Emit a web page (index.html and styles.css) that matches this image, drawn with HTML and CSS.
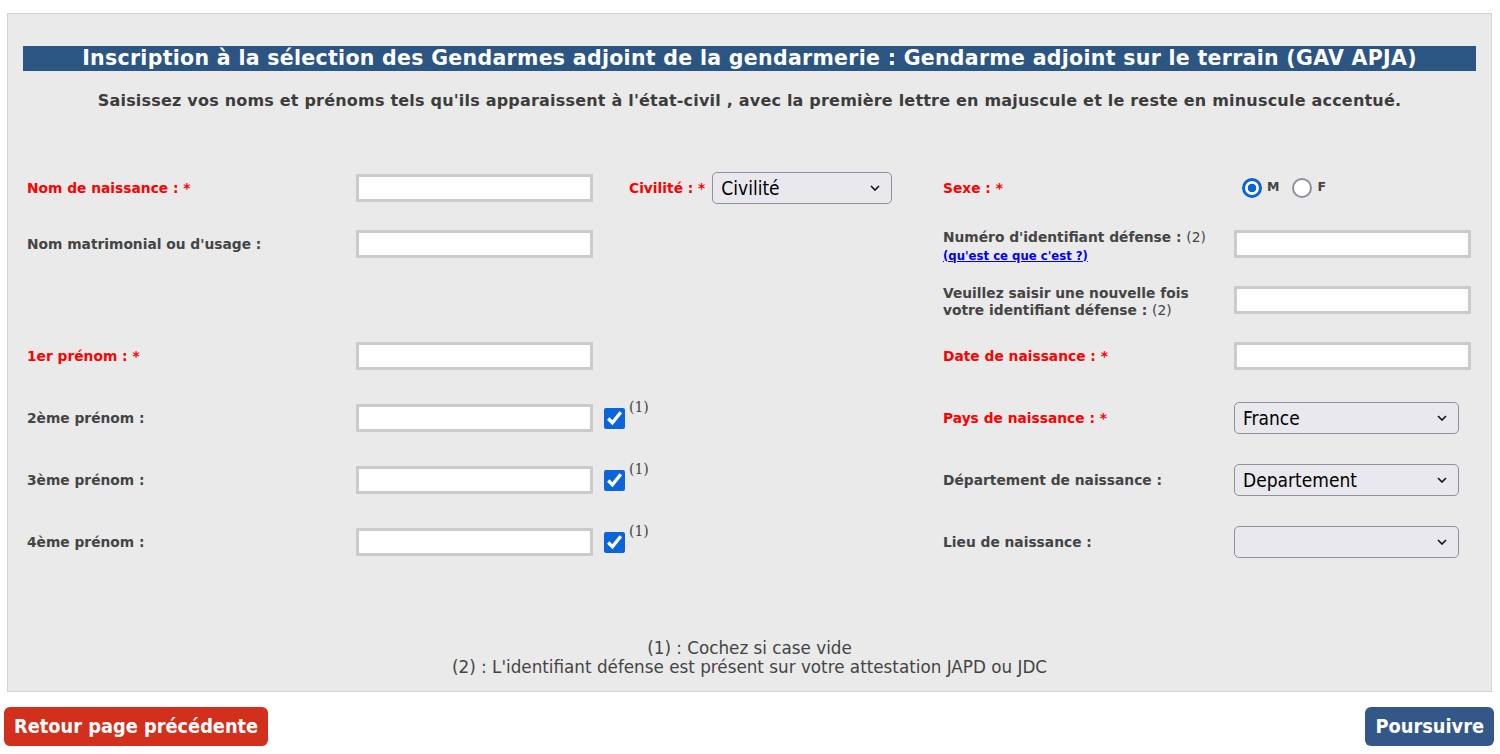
FILE: index.html
```html
<!DOCTYPE html>
<html lang="fr">

	<head>
		<meta charset="utf-8" />
		<title>Inscription GAV APJA</title>
		<link rel="stylesheet" href="styles.css">
	</head>

	<body>
		<div id="cadre">
			<h1 class="titre">Inscription à la sélection des Gendarmes adjoint de la gendarmerie : Gendarme adjoint sur le terrain (GAV APJA)</h1>
			<p class="consigne">Saisissez vos noms et prénoms tels qu'ils apparaissent à l'état-civil , avec la première lettre en majuscule et le reste en minuscule accentué.</p>

			<div class="grille">
				<!--ligne 1-->
				<label class="lib oblig">Nom de naissance : *</label>
				<div><input type="text" class="saisie"></div>
				<div class="milieu civ">
					<label class="lib oblig">Civilité : *</label>
					<span class="liste liste-civ">
						<select><option>Civilité</option></select>
						<svg class="fleche" width="10" height="6" viewBox="0 0 10 6"><path d="M1 1l4 4 4-4" fill="none" stroke="#111" stroke-width="1.6"/></svg>
					</span>
				</div>
				<label class="lib oblig">Sexe : *</label>
				<div class="sexe">
					<input type="radio" name="sexe" checked><span>M</span>
					<input type="radio" name="sexe"><span>F</span>
				</div>

				<!--ligne 2-->
				<label class="lib">Nom matrimonial ou d'usage :</label>
				<div><input type="text" class="saisie"></div>
				<div></div>
				<div class="lib bas">Numéro d'identifiant défense : <span class="renvoi">(2)</span><br><a href="javascript:;" class="aide">(qu'est ce que c'est ?)</a></div>
				<div><input type="text" class="saisie"></div>

				<!--ligne 3-->
				<div></div>
				<div></div>
				<div></div>
				<div class="lib deux bas">Veuillez saisir une nouvelle fois<br>votre identifiant défense : <span class="renvoi">(2)</span></div>
				<div><input type="text" class="saisie"></div>

				<!--ligne 4-->
				<label class="lib oblig haut">1er prénom : *</label>
				<div class="haut"><input type="text" class="saisie"></div>
				<div></div>
				<label class="lib oblig haut">Date de naissance : *</label>
				<div class="haut"><input type="text" class="saisie"></div>

				<!--ligne 5-->
				<label class="lib">2ème prénom :</label>
				<div><input type="text" class="saisie"></div>
				<div class="coches"><input type="checkbox" class="coche" checked><sup>(1)</sup></div>
				<label class="lib oblig">Pays de naissance : *</label>
				<span class="liste">
					<select><option>France</option></select>
					<svg class="fleche" width="10" height="6" viewBox="0 0 10 6"><path d="M1 1l4 4 4-4" fill="none" stroke="#111" stroke-width="1.6"/></svg>
				</span>

				<!--ligne 6-->
				<label class="lib">3ème prénom :</label>
				<div><input type="text" class="saisie"></div>
				<div class="coches"><input type="checkbox" class="coche" checked><sup>(1)</sup></div>
				<label class="lib">Département de naissance :</label>
				<span class="liste">
					<select><option>Departement</option></select>
					<svg class="fleche" width="10" height="6" viewBox="0 0 10 6"><path d="M1 1l4 4 4-4" fill="none" stroke="#111" stroke-width="1.6"/></svg>
				</span>

				<!--ligne 7-->
				<label class="lib">4ème prénom :</label>
				<div><input type="text" class="saisie"></div>
				<div class="coches"><input type="checkbox" class="coche" checked><sup>(1)</sup></div>
				<label class="lib">Lieu de naissance :</label>
				<span class="liste">
					<select><option></option></select>
					<svg class="fleche" width="10" height="6" viewBox="0 0 10 6"><path d="M1 1l4 4 4-4" fill="none" stroke="#111" stroke-width="1.6"/></svg>
				</span>
			</div>

			<div class="notes">
				(1) : Cochez si case vide<br>
				(2) : L'identifiant défense est présent sur votre attestation JAPD ou JDC
			</div>
		</div>

		<div class="boutons">
			<a href="javascript:;" class="btn retour">Retour page précédente</a>
			<a href="javascript:;" class="btn suite">Poursuivre</a>
		</div>
	</body>

</html>
```

FILE: styles.css
```css
* {
	box-sizing: border-box;
}

body {
	margin: 0;
	font-family: "DejaVu Sans", Verdana, sans-serif;
	color: #444;
	background: #fff;
}

#cadre {
	margin: 13px 8px 0 7px;
	border: 1px solid #d2d2d2;
	background: #eaeaea;
	padding: 32px 15px 14px;
}

.titre {
	margin: 0;
	background: #2b5582;
	color: #fff;
	font-size: 20.5px;
	letter-spacing: 0.3px;
	line-height: 25px;
	font-weight: bold;
	text-align: center;
}

.consigne {
	margin: 20px 0 0;
	font-size: 16px;
	letter-spacing: 0.2px;
	line-height: 20px;
	font-weight: bold;
	text-align: center;
	color: #3c3c3c;
}

/* formulaire en 5 colonnes */
.grille {
	display: grid;
	grid-template-columns: 329px 237px 350px 291px 237px;
	grid-template-rows: 56px 56px 56px 59px 62px 62px 62px;
	align-items: center;
	margin-top: 49px;
	padding-left: 4px;
}

.lib {
	font-size: 13.8px;
	font-weight: bold;
	color: #444;
	line-height: 18px;
}

.oblig {
	color: #f00;
}

.renvoi {
	font-weight: normal;
}

.aide {
	font-size: 11.7px;
	color: #00e;
	text-decoration: underline;
}

.bas {
	padding-top: 4px;
}

.haut {
	padding-bottom: 3px;
}

.deux {
	line-height: 17px;
}

.saisie {
	display: block;
	width: 237px;
	height: 28px;
	border: 3px solid #cbcbcb;
	background: #fff;
	outline: none;
}

.milieu {
	display: flex;
	align-items: center;
}

.civ {
	padding-left: 36px;
	gap: 7px;
}

/* case a cocher + renvoi (1) en exposant */
.coches {
	display: flex;
	align-items: flex-start;
	padding: 0 0 7px 11px;
}

.coche {
	margin: 8px 0 0;
	width: 21px;
	height: 21px;
	accent-color: #0b64d8;
}

.coches sup {
	font-family: "DejaVu Serif", serif;
	font-size: 14px;
	line-height: 14px;
	vertical-align: baseline;
	color: #444;
	margin-left: 4px;
}

.sexe {
	display: flex;
	align-items: center;
	padding-left: 8px;
	font-size: 12.5px;
	font-weight: bold;
	color: #444;
}

.sexe input {
	appearance: none;
	margin: 0;
	width: 20px;
	height: 20px;
	border: 2px solid #8f8f9d;
	border-radius: 50%;
	background: #fff;
}

.sexe input:checked {
	border: 3px solid #0b64d8;
	background: radial-gradient(circle, #0b64d8 0 4px, #fff 4.6px);
}

.sexe span {
	margin: -4px 13px 0 5px;
}

.liste {
	position: relative;
	display: block;
	width: 225px;
}

.liste-civ {
	width: 180px;
}

.liste select {
	appearance: none;
	display: block;
	width: 100%;
	height: 32px;
	border: 1px solid #8f8f9d;
	border-radius: 5px;
	background: #e9e9ed;
	font-family: "DejaVu Sans Condensed", "DejaVu Sans", sans-serif;
	font-stretch: condensed;
	font-size: 19px;
	color: #000;
	padding: 0 30px 0 8px;
}

.fleche {
	position: absolute;
	right: 12px;
	top: 13px;
	pointer-events: none;
}

.notes {
	margin-top: 66px;
	text-align: center;
	font-size: 16.8px;
	line-height: 19px;
	color: #444;
}

.boutons {
	display: flex;
	justify-content: space-between;
	margin: 15px 6px 0 4px;
}

.btn {
	font-family: "DejaVu Sans Condensed", "DejaVu Sans", sans-serif;
	font-stretch: condensed;
	font-weight: bold;
	font-size: 19.8px;
	height: 39px;
	line-height: 39px;
	color: #fff;
	text-decoration: none;
	padding: 0 10px;
	border-radius: 6px;
}

.retour {
	background: #d22f1c;
}

.suite {
	background: #34578a;
}
```
